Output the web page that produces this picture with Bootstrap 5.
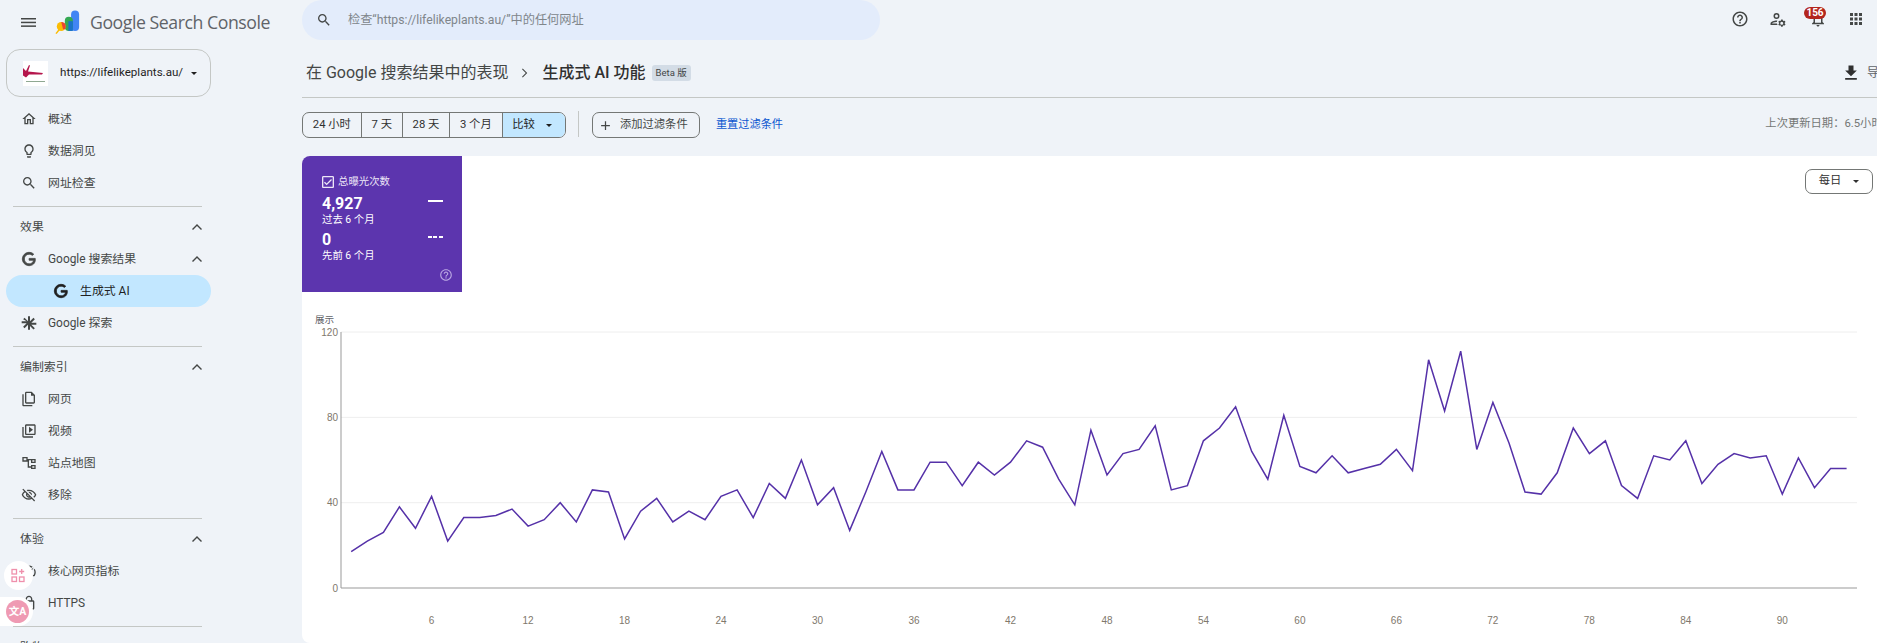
<!DOCTYPE html>
<html lang="zh-CN">
<head>
<meta charset="UTF-8">
<title>生成式 AI 功能</title>
<link href="https://cdn.jsdelivr.net/npm/bootstrap@5.3.0/dist/css/bootstrap.min.css" rel="stylesheet">
<style>
html, body { height: 100%; overflow: hidden; }
body { background: #eff3f8; color: #444746; font-family: Roboto, "Noto Sans CJK SC", sans-serif; font-size: 11.3px; }
svg { display: block; fill: currentColor; flex: none; }
.gsc-side { width: 302px; flex: none; padding-left: 6px; font-size: 11.9px; }
.gsc-brand { height: 49px; padding: 0 0 4px 15px; }
.gsc-logo { margin-left: 19px; }
.gsc-brand-text { font-family: "Open Sans", Roboto, sans-serif; font-size: 17.7px; color: #5f6368; letter-spacing: -.45px; margin-left: 10px; white-space: nowrap; }
.gsc-picker { width: 205px; height: 48px; border: 1px solid #c4c7c5; border-radius: 14px; padding-left: 16px; margin-bottom: 6px; color: #1f1f1f; font-size: 11.6px; }
.gsc-favicon { width: 25px; height: 25px; background: #fff; margin-right: 12px; }
.gsc-caret { width: 0; height: 0; border-left: 3.5px solid transparent; border-right: 3.5px solid transparent; border-top: 3.5px solid currentColor; }
.gsc-row { width: 205px; height: 32px; padding-left: 15px; padding-top: 2px; white-space: nowrap; }
.gsc-row svg { margin-top: -2px; }
.gsc-row svg.gsc-ico { margin-right: 11px; }
.gsc-g { stroke: currentColor; stroke-width: 1.2; }
.gsc-head { padding-left: 14px; padding-right: 8px; }
.gsc-sub { padding-left: 47px; color: #1f1f1f; background: #c2e7ff; border-radius: 16px; }
.gsc-rule { width: 189px; height: 1px; margin: 7px 0 4px 7px; background: #c4c7c5; }
.gsc-main { min-width: 0; }
.gsc-search { width: 578px; height: 40px; flex: none; background: #e3ecfb; border-radius: 20px; padding-left: 14px; color: #80868b; font-size: 12.2px; }
.gsc-search svg { color: #444746; margin-right: 16px; }
.gsc-top-ico { gap: 20px; top: 10px; right: 12px; color: #444746; }
.gsc-bell { width: 18px; margin-left: 2px; }
.gsc-badge { left: -5px; top: -3px; width: 22px; height: 12px; border-radius: 7px; background: #b3261e; color: #fff; font-size: 10px; font-weight: 700; line-height: 12px; text-align: center; }
.gsc-crumb { height: 58px; flex: none; padding: 9px 0 0 4px; border-bottom: 1px solid #c4c7c5; color: #444746; font-size: 16px; white-space: nowrap; }
.gsc-crumb-now { color: #303030; font-weight: 500; }
.gsc-beta { background: #d3dce6; border-radius: 3px; font-size: 9.5px; padding: 1px 4px; margin-left: 6px; }
.gsc-export { margin-right: -14px; font-size: 12px; color: #5f6368; gap: 6px; }
.gsc-export svg { color: #303030; }
.gsc-tools { height: 58px; flex: none; padding-top: 14px; align-items: flex-start; color: #444746; }
.gsc-range { border: 1px solid #747775; border-radius: 7px; height: 26px; overflow: hidden; }
.gsc-range span { height: 100%; padding: 0 9.8px; border-right: 1px solid #747775; color: #303030; white-space: nowrap; }
.gsc-range .gsc-on { background: #c2e7ff; border-right: 0; color: #1f1f1f; gap: 11px; padding-right: 13px; }
.gsc-vline { width: 1px; height: 26px; background: #c4c7c5; margin: -1px 13px 0 12px; }
.gsc-add { border: 1px solid #747775; border-radius: 7px; height: 26px; width: 108px; padding-left: 5px; gap: 7px; }
.gsc-reset { color: #0b57d0; margin-left: 16px; font-size: 11.2px; line-height: 26px; }
.gsc-updated { color: #747775; margin-left: auto; margin-right: -17px; white-space: nowrap; padding-top: 4px; }
.gsc-card { background: #fff; border-radius: 8px 0 0 8px; min-height: 0; }
.gsc-tile { width: 160px; height: 136px; flex: none; background: #5c35ae; color: #fff; border-top-left-radius: 8px; padding: 20px 19px 0 20px; }
.gsc-tile-name { font-size: 10.4px; color: #ece6f7; gap: 4px; height: 12px; margin-bottom: 6px; }
.gsc-num { font-family: Roboto, sans-serif; font-size: 16px; font-weight: 700; line-height: 19px; }
.gsc-when { font-size: 10.4px; line-height: 14px; margin-bottom: 3px; }
.gsc-solid { width: 15px; border-top: 2px solid #fff; margin-top: 6px; }
.gsc-dash { width: 15px; height: 2px; margin-top: 6px; background: repeating-linear-gradient(90deg, #fff 0 4px, transparent 4px 5.5px); }
.gsc-tile-help { right: 9px; bottom: 10px; color: #b9a6e2; }
.gsc-daily { right: 4px; top: 13px; width: 68px; height: 25px; border: 1px solid #747775; border-radius: 7px; gap: 12px; color: #303030; background: #fff; }
.gsc-chart text { font-family: "Liberation Sans", sans-serif; font-size: 10px; fill: #80786c; }
.gsc-chart .gsc-ytitle { font-family: "Noto Sans CJK SC", sans-serif; font-size: 9.6px; fill: #5f6368; }
.gsc-float-a { left: 4px; top: 561px; width: 29px; height: 29px; border-radius: 50%; background: #fff; color: #ef8fab; }
.gsc-float-a svg { fill: none; }
.gsc-float-b { left: 0; top: 597px; width: 33px; height: 29px; background: #fff; border-radius: 0 15px 15px 0; }
.gsc-float-c { width: 23px; height: 23px; border-radius: 50%; background: #ef9ab3; color: #fff; margin-left: 6px; font-size: 10.5px; font-weight: 700; }
</style>
</head>
<body>
<div class="d-flex h-100">

  <aside class="gsc-side">
    <div class="gsc-brand d-flex align-items-center">
      <svg width="15" height="9" viewBox="0 0 15 9"><rect y="0" width="15" height="1.500"/><rect y="3.700" width="15" height="1.500"/><rect y="7.400" width="15" height="1.500"/></svg>
      <svg class="gsc-logo" width="25" height="25" viewBox="0 0 28 27">
        <rect x="18" y="0" width="9" height="23" rx="4.500" fill="#4285f4"/>
        <rect x="11" y="7" width="9" height="16" rx="4.500" fill="#34a853"/>
        <rect x="15" y="12" width="5" height="11" fill="#1a73c8"/>
        <circle cx="7" cy="18" r="5" fill="#fbbc04"/>
        <path d="M7 13a5 5 0 0 1 5 5 5 5 0 0 1-1 3H9z" fill="#ea4335"/>
        <path d="M4 21l-3.500 4.500 1.300 1L5.500 22z" fill="#fbbc04"/>
      </svg>
      <span class="gsc-brand-text">Google Search Console</span>
    </div>

    <div class="gsc-picker d-flex align-items-center">
      <span class="gsc-favicon d-flex align-items-center">
        <svg width="25" height="25" viewBox="0 0 25 25"><path d="M0 7l3 3 3-6 1 .5-2 6 15 1.500-1 1.500H6l-3 3-3-2z" fill="#b5164c"/><rect x="3" y="20" width="19" height="1" fill="#8fa892"/></svg>
      </span>
      <span>https://lifelikeplants.au/</span>
      <span class="gsc-caret ms-2"></span>
    </div>

    <div class="gsc-row d-flex align-items-center">
      <svg class="gsc-ico" width="16" height="16" viewBox="0 0 24 24"><path d="M12 5.690l5 4.500V18h-2v-6H9v6H7v-7.810l5-4.500M12 3L2 12h3v8h6v-6h2v6h6v-8h3L12 3z"/></svg>概述
    </div>
    <div class="gsc-row d-flex align-items-center">
      <svg class="gsc-ico" width="16" height="16" viewBox="0 0 24 24"><path d="M9 21c0 .55.45 1 1 1h4c.55 0 1-.45 1-1v-1H9v1zm3-19C8.140 2 5 5.140 5 9c0 2.380 1.190 4.470 3 5.740V17c0 .55.45 1 1 1h6c.55 0 1-.45 1-1v-2.260c1.810-1.270 3-3.360 3-5.740 0-3.860-3.140-7-7-7zm2.850 11.100l-.85.6V16h-4v-2.300l-.85-.6C7.800 12.160 7 10.630 7 9c0-2.760 2.240-5 5-5s5 2.240 5 5c0 1.630-.8 3.160-2.150 4.100z"/></svg>数据洞见
    </div>
    <div class="gsc-row d-flex align-items-center">
      <svg class="gsc-ico" width="16" height="16" viewBox="0 0 24 24"><path d="M15.500 14h-.79l-.28-.27C15.410 12.590 16 11.110 16 9.500 16 5.910 13.090 3 9.500 3S3 5.910 3 9.500 5.910 16 9.500 16c1.610 0 3.090-.59 4.230-1.570l.27.28v.79l5 4.990L20.490 19l-4.990-5zm-6 0C7.010 14 5 11.990 5 9.500S7.010 5 9.500 5 14 7.010 14 9.500 11.990 14 9.500 14z"/></svg>网址检查
    </div>
    <div class="gsc-rule"></div>

    <div class="gsc-row gsc-head d-flex align-items-center justify-content-between">效果
      <svg width="12" height="12" viewBox="0 0 24 24"><path d="M12 6l-10 10 2 2 8-8 8 8 2-2z"/></svg>
    </div>
    <div class="gsc-row d-flex align-items-center pe-2">
      <svg class="gsc-ico gsc-g" width="16" height="16" viewBox="0 0 24 24"><path d="M21.350 11.100h-9.170v2.730h6.510c-.33 3.810-3.500 5.440-6.500 5.440C8.360 19.270 5 16.250 5 12c0-4.100 3.200-7.270 7.200-7.270 3.090 0 4.900 1.970 4.900 1.970L19 4.720S16.560 2 12.100 2C6.420 2 2.030 6.800 2.030 12c0 5.050 4.130 10 10.220 10 5.350 0 9.250-3.670 9.250-9.090 0-1.150-.15-1.810-.15-1.810z"/></svg>Google 搜索结果
      <svg class="ms-auto" width="12" height="12" viewBox="0 0 24 24"><path d="M12 6l-10 10 2 2 8-8 8 8 2-2z"/></svg>
    </div>
    <div class="gsc-row gsc-sub d-flex align-items-center">
      <svg class="gsc-ico gsc-g" width="16" height="16" viewBox="0 0 24 24"><path d="M21.350 11.100h-9.170v2.730h6.510c-.33 3.810-3.500 5.440-6.500 5.440C8.360 19.270 5 16.250 5 12c0-4.100 3.200-7.270 7.200-7.270 3.090 0 4.900 1.970 4.900 1.970L19 4.720S16.560 2 12.100 2C6.420 2 2.030 6.800 2.030 12c0 5.050 4.130 10 10.220 10 5.350 0 9.250-3.670 9.250-9.090 0-1.150-.15-1.810-.15-1.810z"/></svg>生成式 AI
    </div>
    <div class="gsc-row d-flex align-items-center">
      <svg class="gsc-ico" width="16" height="16" viewBox="0 0 24 24"><path d="M10.500 2h3v7.400l5.200-5.300 2.100 2.100-5.300 5.300H23v3h-7.500l5.300 5.300-2.100 2.100-5.200-5.300V22h-3v-7.400l-5.200 5.300-2.100-2.100 5.300-5.300H1v-3h7.500L3.200 6.200l2.100-2.100 5.200 5.300z"/></svg>Google 探索
    </div>
    <div class="gsc-rule"></div>

    <div class="gsc-row gsc-head d-flex align-items-center justify-content-between">编制索引
      <svg width="12" height="12" viewBox="0 0 24 24"><path d="M12 6l-10 10 2 2 8-8 8 8 2-2z"/></svg>
    </div>
    <div class="gsc-row d-flex align-items-center">
      <svg class="gsc-ico" width="16" height="16" viewBox="0 0 24 24"><path d="M16 1H8C6.900 1 6 1.900 6 3v14c0 1.100.9 2 2 2h11c1.100 0 2-.9 2-2V6l-5-5zM8 17V3h7v4h4v10H8zM4 5H2v16c0 1.100.9 2 2 2h13v-2H4V5z"/></svg>网页
    </div>
    <div class="gsc-row d-flex align-items-center">
      <svg class="gsc-ico" width="16" height="16" viewBox="0 0 24 24"><path d="M4 6H2v14c0 1.100.9 2 2 2h14v-2H4V6zm16-4H8c-1.100 0-2 .9-2 2v12c0 1.100.9 2 2 2h12c1.100 0 2-.9 2-2V4c0-1.100-.9-2-2-2zm0 14H8V4h12v12zM12 5.500v9l6-4.500z"/></svg>视频
    </div>
    <div class="gsc-row d-flex align-items-center">
      <svg class="gsc-ico" width="16" height="16" viewBox="0 0 24 24"><path d="M2 3h8v7H2zm2 2v3h4V5zM15 6h7v6h-7zm2 2v2h3V8zM15 15h7v6h-7zm2 2v2h3v-2zM10 6h5v2h-3v9h3v2h-5z"/></svg>站点地图
    </div>
    <div class="gsc-row d-flex align-items-center">
      <svg class="gsc-ico" width="16" height="16" viewBox="0 0 24 24"><path d="M12 6c3.790 0 7.170 2.130 8.820 5.500-.59 1.220-1.420 2.270-2.410 3.120l1.410 1.410c1.390-1.230 2.490-2.770 3.180-4.530C21.270 7.110 17 4 12 4c-1.270 0-2.490.2-3.640.57l1.650 1.650C10.660 6.090 11.320 6 12 6zm-1.070 1.140L13 9.210c.57.25 1.030.71 1.280 1.280l2.070 2.070c.08-.34.14-.7.14-1.070C16.500 9.010 14.480 7 12 7c-.37 0-.72.05-1.070.14zM2.010 3.870l2.680 2.680C3.060 7.830 1.770 9.530 1 11.500 2.730 15.890 7 19 12 19c1.520 0 2.980-.29 4.320-.82l3.420 3.420 1.410-1.410L3.420 2.450 2.010 3.870zm7.500 7.500l2.610 2.610c-.04.01-.08.02-.12.02-1.380 0-2.500-1.120-2.500-2.500 0-.05.01-.08.01-.13zm-3.400-3.400l1.750 1.750c-.23.55-.36 1.150-.36 1.780 0 2.480 2.020 4.500 4.500 4.500.63 0 1.230-.13 1.770-.36l.98.98c-.88.24-1.800.38-2.750.38-3.790 0-7.170-2.130-8.820-5.500.7-1.430 1.720-2.610 2.930-3.530z"/></svg>移除
    </div>
    <div class="gsc-rule"></div>

    <div class="gsc-row gsc-head d-flex align-items-center justify-content-between">体验
      <svg width="12" height="12" viewBox="0 0 24 24"><path d="M12 6l-10 10 2 2 8-8 8 8 2-2z"/></svg>
    </div>
    <div class="gsc-row d-flex align-items-center">
      <svg class="gsc-ico" width="16" height="16" viewBox="0 0 24 24"><path d="M20.400 8.500l-1.200 1.800a8 8 0 0 1-.2 7.700H5a8 8 0 0 1 10.700-11l1.800-1.200A10 10 0 0 0 3.300 19a2 2 0 0 0 1.700 1h14a2 2 0 0 0 1.700-1 10 10 0 0 0-.3-10.500zM10.600 15.400a2 2 0 0 0 2.800 0l5.700-8.500-8.500 5.700a2 2 0 0 0 0 2.800z"/></svg>核心网页指标
    </div>
    <div class="gsc-row d-flex align-items-center">
      <svg class="gsc-ico" width="16" height="16" viewBox="0 0 24 24"><path d="M18 8h-1V6c0-2.760-2.240-5-5-5S7 3.240 7 6v2H6c-1.100 0-2 .9-2 2v10c0 1.100.9 2 2 2h12c1.100 0 2-.9 2-2V10c0-1.100-.9-2-2-2zM9 6c0-1.660 1.340-3 3-3s3 1.340 3 3v2H9V6zm9 14H6V10h12v10zm-6-3c1.100 0 2-.9 2-2s-.9-2-2-2-2 .9-2 2 .9 2 2 2z"/></svg>HTTPS
    </div>
    <div class="gsc-rule"></div>
    <div class="gsc-row gsc-head d-flex align-items-center">购物</div>
  </aside>

  <main class="gsc-main flex-grow-1 d-flex flex-column position-relative">
    <div class="gsc-search d-flex align-items-center">
      <svg width="16" height="16" viewBox="0 0 24 24"><path d="M15.500 14h-.79l-.28-.27C15.410 12.590 16 11.110 16 9.500 16 5.910 13.090 3 9.500 3S3 5.910 3 9.500 5.910 16 9.500 16c1.610 0 3.090-.59 4.230-1.570l.27.28v.79l5 4.990L20.490 19l-4.990-5zm-6 0C7.010 14 5 11.990 5 9.500S7.010 5 9.500 5 14 7.010 14 9.500 11.990 14 9.500 14z"/></svg>
      检查“https://lifelikeplants.au/”中的任何网址
    </div>

    <div class="gsc-top-ico position-absolute d-flex align-items-center">
      <svg width="18" height="18" viewBox="0 0 24 24"><path d="M11 18h2v-2h-2v2zm1-16C6.480 2 2 6.480 2 12s4.480 10 10 10 10-4.480 10-10S17.520 2 12 2zm0 18c-4.410 0-8-3.590-8-8s3.590-8 8-8 8 3.590 8 8-3.590 8-8 8zm0-14c-2.210 0-4 1.790-4 4h2c0-1.100.9-2 2-2s2 .9 2 2c0 2-3 1.750-3 5h2c0-2.250 3-2.500 3-5 0-2.210-1.790-4-4-4z"/></svg>
      <svg width="18" height="18" viewBox="0 0 24 24"><path d="M10 12a4 4 0 1 0 0-8 4 4 0 0 0 0 8zm0-6a2 2 0 1 1 0 4 2 2 0 0 1 0-4zM4 18c.2-.7 3.300-2 6-2h.5a6 6 0 0 1 .6-2H10c-2.700 0-8 1.300-8 4v2h9.500a6 6 0 0 1-.9-2zM21 17.500c0-.2 0-.4-.1-.6l1.100-1-1-1.700-1.400.5c-.3-.3-.7-.5-1.100-.6l-.3-1.500h-2l-.3 1.500c-.4.1-.8.3-1.100.6l-1.400-.5-1 1.700 1.100 1a3 3 0 0 0 0 1.200l-1.100 1 1 1.700 1.400-.5c.3.3.7.5 1.100.6l.3 1.500h2l.3-1.500c.4-.1.8-.3 1.100-.6l1.400.5 1-1.700-1.100-1c.1-.2.1-.4.1-.6zm-4 2a2 2 0 1 1 0-4 2 2 0 0 1 0 4z"/></svg>
      <div class="gsc-bell position-relative">
        <svg width="18" height="18" viewBox="0 0 24 24"><path d="M12 22c1.100 0 2-.9 2-2h-4c0 1.100.9 2 2 2zm6-6v-5c0-3.070-1.630-5.640-4.500-6.320V4c0-.83-.67-1.500-1.500-1.500s-1.500.67-1.500 1.500v.68C7.640 5.360 6 7.920 6 11v5l-2 2v1h16v-1l-2-2zm-2 1H8v-6c0-2.480 1.510-4.500 4-4.500s4 2.020 4 4.500v6z"/></svg>
        <span class="gsc-badge position-absolute">156</span>
      </div>
      <svg width="18" height="18" viewBox="0 0 18 18"><rect x="3" y="3" width="3" height="3"/><rect x="7.500" y="3" width="3" height="3"/><rect x="12" y="3" width="3" height="3"/><rect x="3" y="7.500" width="3" height="3"/><rect x="7.500" y="7.500" width="3" height="3"/><rect x="12" y="7.500" width="3" height="3"/><rect x="3" y="12" width="3" height="3"/><rect x="7.500" y="12" width="3" height="3"/><rect x="12" y="12" width="3" height="3"/></svg>
    </div>

    <div class="gsc-crumb d-flex align-items-center">
      <span>在 Google 搜索结果中的表现</span>
      <svg class="mx-2" width="18" height="18" viewBox="0 0 24 24"><path d="M9 6l6 6-6 6-1-1 5-5-5-5z"/></svg>
      <span class="gsc-crumb-now">生成式 AI 功能</span>
      <span class="gsc-beta">Beta 版</span>
      <span class="gsc-export ms-auto d-flex align-items-center">
        <svg width="20" height="20" viewBox="0 0 24 24"><path d="M19 9h-4V3H9v6H5l7 7 7-7zM5 18v2h14v-2H5z"/></svg>导出
      </span>
    </div>

    <div class="gsc-tools d-flex">
      <div class="gsc-range d-flex">
        <span class="d-flex align-items-center">24 小时</span>
        <span class="d-flex align-items-center">7 天</span>
        <span class="d-flex align-items-center">28 天</span>
        <span class="d-flex align-items-center">3 个月</span>
        <span class="gsc-on d-flex align-items-center">比较<i class="gsc-caret"></i></span>
      </div>
      <div class="gsc-vline"></div>
      <div class="gsc-add d-flex align-items-center">
        <svg width="15" height="15" viewBox="0 0 24 24"><path d="M19 13h-6v6h-2v-6H5v-2h6V5h2v6h6z"/></svg>添加过滤条件
      </div>
      <span class="gsc-reset">重置过滤条件</span>
      <span class="gsc-updated">上次更新日期&#xFF1A;6.5小时前</span>
    </div>

    <section class="gsc-card flex-grow-1 position-relative">
      <div class="gsc-tile position-relative">
        <div class="gsc-tile-name d-flex align-items-center">
          <svg width="12" height="12" viewBox="3 3 18 18"><path d="M19 3H5c-1.100 0-2 .9-2 2v14c0 1.100.9 2 2 2h14c1.100 0 2-.9 2-2V5c0-1.100-.9-2-2-2zm0 16H5V5h14v14zM17.990 9l-1.410-1.420-6.590 6.590-2.580-2.570-1.420 1.410 4 3.990z"/></svg>总曝光次数
        </div>
        <div class="d-flex justify-content-between">
          <div>
            <div class="gsc-num">4,927</div>
            <div class="gsc-when">过去 6 个月</div>
          </div>
          <div class="gsc-solid"></div>
        </div>
        <div class="d-flex justify-content-between">
          <div>
            <div class="gsc-num">0</div>
            <div class="gsc-when">先前 6 个月</div>
          </div>
          <div class="gsc-dash"></div>
        </div>
        <svg class="gsc-tile-help position-absolute" width="14" height="14" viewBox="0 0 24 24"><path d="M11 18h2v-2h-2v2zm1-16C6.480 2 2 6.480 2 12s4.480 10 10 10 10-4.480 10-10S17.520 2 12 2zm0 18c-4.410 0-8-3.590-8-8s3.590-8 8-8 8 3.590 8 8-3.590 8-8 8zm0-14c-2.210 0-4 1.790-4 4h2c0-1.100.9-2 2-2s2 .9 2 2c0 2-3 1.750-3 5h2c0-2.250 3-2.500 3-5 0-2.210-1.790-4-4-4z"/></svg>
      </div>
      <div class="gsc-daily position-absolute d-flex align-items-center justify-content-center">每日<span class="gsc-caret"></span></div>
      <svg id="chart" class="gsc-chart" width="1575" height="350" viewBox="0 0 1575 350"></svg>
    </section>
  </main>
</div>

<div class="gsc-float-a position-absolute d-flex align-items-center justify-content-center">
  <svg width="15" height="15" viewBox="0 0 15 15" stroke="currentColor" stroke-width="1.300"><rect x="1" y="1.500" width="4.500" height="4.500"/><rect x="1" y="9" width="4.500" height="4.500"/><rect x="8.500" y="9" width="4.500" height="4.500"/><path d="M10.700 1v5M8.200 3.500h5"/></svg>
</div>
<div class="gsc-float-b position-absolute d-flex align-items-center">
  <div class="gsc-float-c d-flex align-items-center justify-content-center">文A</div>
</div>

<script>
  var data = [17,22,26,38,28,43,22,33,33,34,37,29,32,40,31,46,45,23,36,42,31,36,32,43,46,33,49,42,60,39,47,27,45,64,46,46,59,59,48,59,53,59,69,66,51,39,74,53,63,65,76,46,48,69,75,85,64,51,81,57,54,62,54,56,58,65,55,107,83,111,65,87,68,45,44,54,75,63,69,48,42,62,60,69,49,58,63,61,62,44,61,47,56,56];
  var left = 39, right = 1555, bottom = 296, perUnit = 2.133;
  var out = '<text class="gsc-ytitle" x="13" y="31">展示</text>';
  [0, 40, 80, 120].forEach(function (v) {
    var y = bottom - v * perUnit;
    out += '<line x1="' + left + '" x2="' + right + '" y1="' + y + '" y2="' + y + '" stroke="' + (v ? '#eeeeee' : '#999999') + '"/>';
    out += '<text x="36" y="' + (y + 3.5) + '" text-anchor="end">' + v + '</text>';
  });
  out += '<line x1="' + left + '" x2="' + left + '" y1="40" y2="' + bottom + '" stroke="#999999"/>';
  var pts = data.map(function (v, i) {
    return (49.2 + i * 16.08).toFixed(1) + ',' + (bottom - v * perUnit).toFixed(1);
  });
  out += '<polyline points="' + pts.join(' ') + '" style="fill:none" stroke="#5531a8" stroke-width="1.500"/>';
  for (var t = 6; t <= 90; t += 6) {
    out += '<text x="' + (49.2 + (t - 1) * 16.08) + '" y="332" text-anchor="middle">' + t + '</text>';
  }
  document.getElementById('chart').innerHTML = out;
</script>
</body>
</html>
